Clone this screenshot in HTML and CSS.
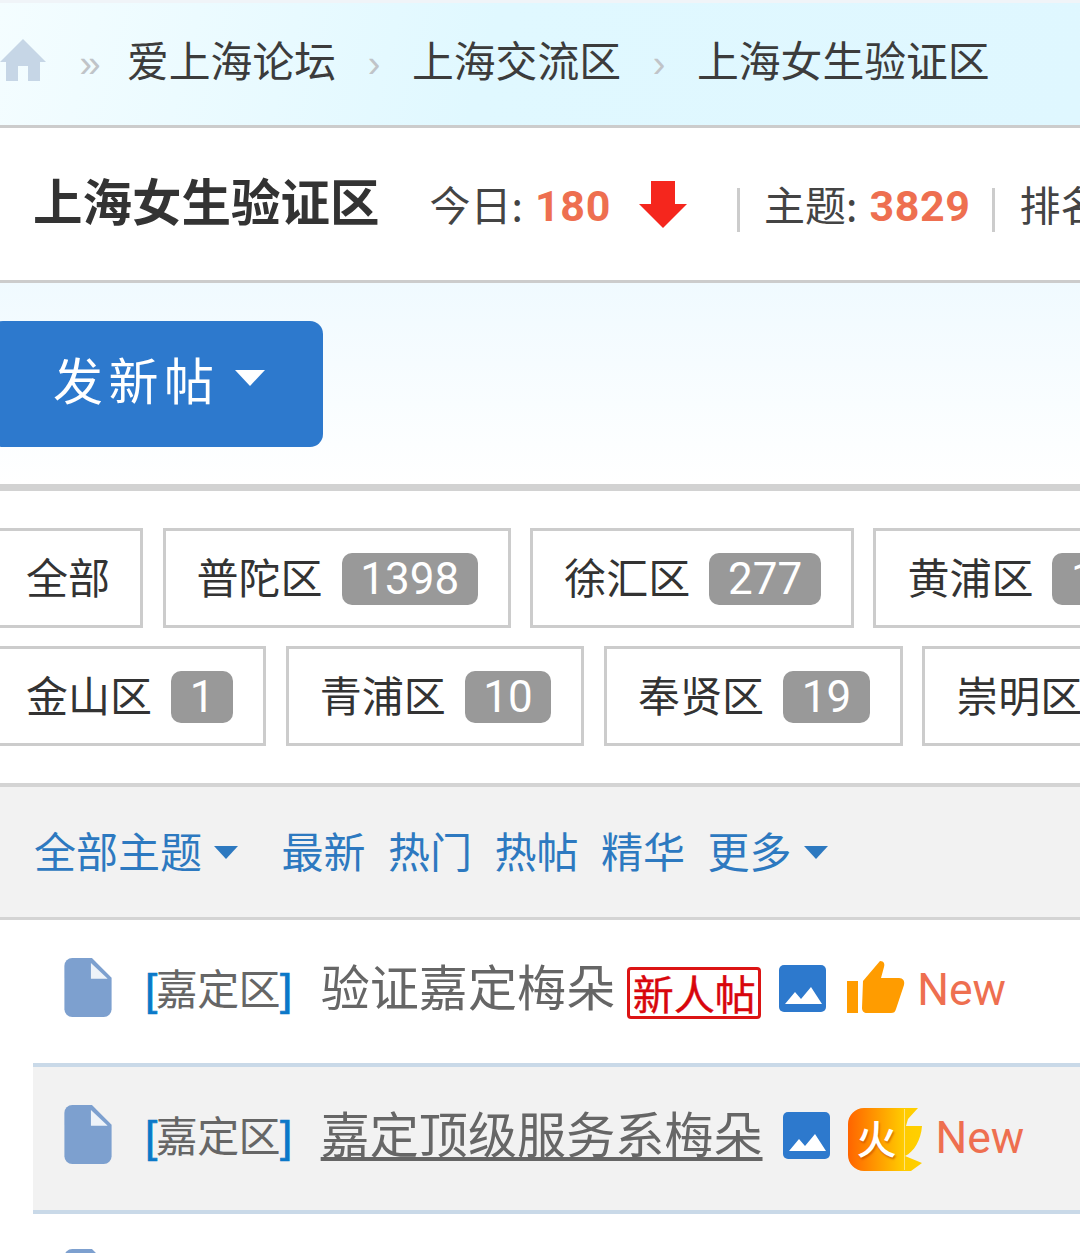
FILE: index.html
```html
<!DOCTYPE html>
<html lang="zh-CN">
<head>
<meta charset="utf-8">
<title>上海女生验证区</title>
<link rel="stylesheet" href="styles.css">
</head>
<body>
<div class="page">
  <nav class="crumbs">
    <svg class="home" viewBox="0 0 46 42"><path d="M23 0 46 23h-6v19H28V27H18v15H6V23H0z"/></svg>
    <span class="sep first">»</span>
    <a class="crumb">爱上海论坛</a>
    <span class="sep">›</span>
    <a class="crumb">上海交流区</a>
    <span class="sep">›</span>
    <a class="crumb">上海女生验证区</a>
  </nav>
  <header class="head">
    <h1 class="title">上海女生验证区</h1>
    <span class="stat today">今日: <b>180</b></span>
    <svg class="down" viewBox="0 0 48 47"><path d="M12 0h24v23h12L24 47 0 23h12z"/></svg>
    <i class="pipe pipe-a"></i>
    <span class="stat">主题: <b>3829</b></span>
    <i class="pipe pipe-b"></i>
    <span class="stat">排名: <b>12</b></span>
  </header>
  <section class="post">
    <button class="newpost">发新帖<i class="caret"></i></button>
  </section>
  <section class="filters">
    <div class="filter-row">
      <a class="tag first-tag">全部</a>
      <a class="tag">普陀区<span class="count">1398</span></a>
      <a class="tag">徐汇区<span class="count">277</span></a>
      <a class="tag">黄浦区<span class="count">1</span></a>
    </div>
    <div class="filter-row">
      <a class="tag first-tag">金山区<span class="count">1</span></a>
      <a class="tag">青浦区<span class="count">10</span></a>
      <a class="tag">奉贤区<span class="count">19</span></a>
      <a class="tag">崇明区</a>
    </div>
  </section>
  <section class="tabs">
    <a class="tab">全部主题<i class="tcaret"></i></a>
    <a class="tab tab-gap">最新</a>
    <a class="tab">热门</a>
    <a class="tab">热帖</a>
    <a class="tab">精华</a>
    <a class="tab">更多<i class="tcaret"></i></a>
  </section>
  <section class="threads">
    <div class="thread">
      <svg class="doc" viewBox="0 0 48 60"><path class="doc-body" d="M8 0h20l20 20v32a8 8 0 0 1-8 8H8a8 8 0 0 1-8-8V8a8 8 0 0 1 8-8z"/><path class="doc-fold" d="M27 5v16h17z"/></svg>
      <span class="cat"><em>[</em>嘉定区<em>]</em></span>
      <a class="subject">验证嘉定梅朵</a>
      <span class="newbie">新人帖</span>
      <svg class="pic" viewBox="0 0 47 47"><rect width="47" height="47" rx="5"/><path d="M6 39 16 27l6 7 10-12 11 17z"/></svg>
      <svg class="thumb" viewBox="0 0 58 52"><path d="M0 20h11v32H0z"/><path d="M16 20 33 0c4 0 5 3 4 6l-3 11h18c4 0 6 3 5 7l-8 24c-1 3-2 4-5 4H20c-3 0-5-2-5-5z"/></svg>
      <span class="new">New</span>
    </div>
    <div class="thread alt">
      <svg class="doc" viewBox="0 0 48 60"><path class="doc-body" d="M8 0h20l20 20v32a8 8 0 0 1-8 8H8a8 8 0 0 1-8-8V8a8 8 0 0 1 8-8z"/><path class="doc-fold" d="M27 5v16h17z"/></svg>
      <span class="cat"><em>[</em>嘉定区<em>]</em></span>
      <a class="subject linked">嘉定顶级服务系梅朵</a>
      <svg class="pic pic-b" viewBox="0 0 47 47"><rect width="47" height="47" rx="5"/><path d="M6 39 16 27l6 7 10-12 11 17z"/></svg>
      <span class="fire">
        <svg class="fire-shape" viewBox="0 0 75 63">
          <defs><linearGradient id="fireGrad" x1="0" y1="0" x2="1" y2="0"><stop offset="0" stop-color="#ff6400"/><stop offset=".75" stop-color="#ffcb00"/><stop offset="1" stop-color="#ffd000"/></linearGradient></defs>
          <path fill="url(#fireGrad)" d="M17 0H70L60 11 58 18H74C73 32 66 44 57 48L74 55 63 63H16A16 16 0 0 1 0 47V16A16 16 0 0 1 16 0Z"/>
          <path class="fire-seam" d="M56.500 1V62"/>
        </svg>
        <span class="fire-text">火</span>
      </span>
      <span class="new new-b">New</span>
    </div>
    <div class="thread last">
      <svg class="doc" viewBox="0 0 48 60"><path class="doc-body" d="M8 0h20l20 20v32a8 8 0 0 1-8 8H8a8 8 0 0 1-8-8V8a8 8 0 0 1 8-8z"/></svg>
    </div>
  </section>
</div>
</body>
</html>
```

FILE: styles.css
```css
* { box-sizing: border-box; }
html, body { margin: 0; padding: 0; }
body {
  width: 1080px;
  height: 1253px;
  overflow: hidden;
  background: #fff;
  font-family: "Liberation Sans", Roboto, "Noto Sans CJK SC", sans-serif;
  color: #333;
}
.page { width: 1080px; height: 1253px; overflow: hidden; }
i, em { font-style: normal; }

.crumbs {
  height: 128px;
  border-top: 3px solid #f0f4f8;
  border-bottom: 3px solid #ccc;
  padding-bottom: 10px;
  background: linear-gradient(105deg, #f4fdff 0%, #e0f8ff 45%, #dff7ff 100%);
  display: flex;
  align-items: center;
  white-space: nowrap;
  font-family: "Noto Sans CJK SC", sans-serif;
}
.home { width: 46px; height: 42px; fill: #c6d6e6; margin-top: 1px; flex: none; }
.crumb { font-size: 41.8px; line-height: 60px; color: #3c3c3c; }
.sep { color: #c0c4c8; font-size: 38px; width: 40px; text-align: center; margin: 10px 18px 0; font-family: "Liberation Sans", sans-serif; }
.sep.first { width: 22px; margin: 10px 26px 0 33px; }

.head {
  height: 155px;
  border-bottom: 3px solid #ccc;
  display: flex;
  align-items: center;
  padding-left: 33px;
  white-space: nowrap;
}
.title { margin: 0 50px 8px 0; font: 700 49.5px/60px "Noto Sans CJK SC", sans-serif; color: #333; }
.stat { font: 400 41px/60px "Noto Sans CJK SC", sans-serif; color: #444; }
.stat b { margin-left: 3px; font: 700 43px/60px Roboto, sans-serif; color: #ee6f50; letter-spacing: .6px; }
.down { width: 48px; height: 47px; fill: #f5261d; margin: 1px 0 0 28px; flex: none; }
.pipe { width: 3px; height: 44px; background: #ccc; flex: none; margin-top: 12px; }
.pipe-a { margin-left: 50px; margin-right: 24px; }
.pipe-b { margin-left: 21px; margin-right: 25px; }

.post {
  height: 208px;
  border-bottom: 7px solid #d2d2d2;
  background: linear-gradient(#f0faff, #fff);
  padding-top: 38px;
}
.newpost {
  display: flex;
  align-items: center;
  width: 333px;
  height: 126px;
  margin-left: -10px;
  padding: 0 0 12px 63px;
  border: 0;
  border-radius: 13px;
  background: #2d79cd;
  color: #fff;
  font: 400 50px/60px "Noto Sans CJK SC", sans-serif;
  letter-spacing: 5.5px;
}
.caret {
  width: 0; height: 0;
  margin-left: 15px;
  border-left: 15px solid transparent;
  border-right: 15px solid transparent;
  border-top: 16px solid #fff;
}

.filters { padding-top: 37px; height: 292px; }
.filter-row { display: flex; gap: 19.5px; height: 100px; margin-bottom: 18px; white-space: nowrap; }
.tag {
  display: flex;
  align-items: center;
  flex: none;
  height: 100px;
  padding: 0 30px 4px 31px;
  border: 3px solid #ccc;
  color: #333;
  font: 400 42px/60px "Noto Sans CJK SC", sans-serif;
}
.first-tag { margin-left: -3px; padding-left: 26px; }
.count {
  display: inline-block;
  margin: 6px 0 0 19px;
  padding: 0 18.7px;
  height: 52px;
  border-radius: 10px;
  background: #999;
  color: #fff;
  font: 400 44px/52px Roboto, sans-serif;
}

.tabs {
  height: 137px;
  border-top: 4px solid #d4d4d4;
  border-bottom: 3px solid #d4d4d4;
  background: #f2f2f2;
  display: flex;
  align-items: center;
  padding: 0 0 4px 34px;
  gap: 22.5px;
  white-space: nowrap;
}
.tab { display: flex; align-items: center; color: #2d79c0; font: 400 42px/60px "Noto Sans CJK SC", sans-serif; }
.tab-gap { margin-left: 21px; }
.tcaret {
  width: 0; height: 0;
  margin: 4px 0 0 12px;
  border-left: 12px solid transparent;
  border-right: 12px solid transparent;
  border-top: 13px solid #2d79c0;
}

.threads { padding-left: 33px; }
.thread {
  position: relative;
  display: flex;
  align-items: center;
  height: 143px;
  padding: 0 0 7px 31px;
  white-space: nowrap;
}
.alt { height: 151px; border-top: 4px solid #c9d9e8; border-bottom: 4px solid #c9d9e8; background: #f2f2f2; padding-bottom: 6px; }
.last { align-items: flex-start; padding-top: 37px; }
.doc { width: 48px; height: 59px; flex: none; margin-top: -2px; }
.alt .doc { margin-top: -3px; }
.doc-body { fill: #7da0cf; }
.doc-fold { fill: #eef3f9; }
.cat { margin-left: 33px; color: #666; font: 400 42px/60px "Noto Sans CJK SC", sans-serif; letter-spacing: -.6px; }
.cat em { color: #0b78c8; font-family: "Liberation Sans", sans-serif; font-size: 44px; letter-spacing: -1.5px; -webkit-text-stroke: .7px #0b78c8; }
.subject { margin: 0 0 7px 30px; color: #666; font: 400 49.1px/60px "Noto Sans CJK SC", sans-serif; }
.linked { text-decoration: underline; text-underline-offset: 4px; }
.newbie {
  margin: 10px 0 0 12px;
  width: 134px;
  height: 52px;
  border: 3px solid #dc1414;
  border-radius: 4px;
  color: #d8060c;
  font: 400 41px/44px "Noto Sans CJK SC", sans-serif;
  -webkit-text-stroke: .4px #d8060c;
  text-align: center;
  overflow: hidden;
}
.pic { width: 47px; height: 47px; flex: none; margin-left: 18px; }
.pic rect { fill: #2d79cd; }
.pic path { fill: #fff; }
.pic-b { margin-left: 20px; }
.thumb { width: 58px; height: 52px; fill: #ff9c00; flex: none; margin: -3px 0 0 21px; }
.new { margin: 4px 0 0 12px; color: #ee6f50; font: 400 44.5px/60px Roboto, sans-serif; }
.new-b { margin-left: 13px; }
.fire { position: relative; display: block; width: 75px; height: 63px; margin: 8px 0 0 18px; flex: none; }
.fire-shape { display: block; width: 75px; height: 63px; }
.fire-seam { stroke: #ffe27a; stroke-width: 1; fill: none; }
.fire-text {
  position: absolute;
  left: 9px; top: -1px;
  color: #fff;
  font: 500 40px/60px "Noto Sans CJK SC", sans-serif;
  text-shadow: 1px 2px 2px rgba(190, 70, 0, .6);
}
```
